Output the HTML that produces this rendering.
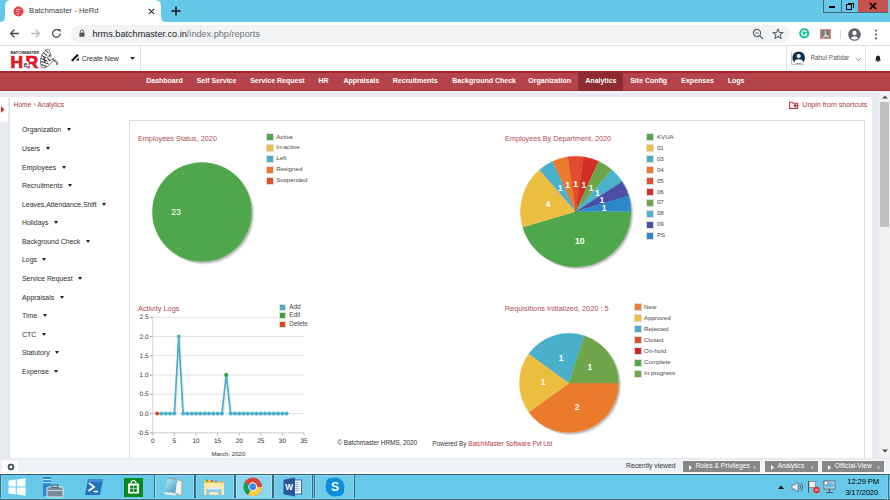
<!DOCTYPE html>
<html><head><meta charset="utf-8">
<style>
*{box-sizing:border-box;margin:0;padding:0}
html,body{width:890px;height:500px;overflow:hidden;background:#fff;font-family:"Liberation Sans",sans-serif;position:relative}
.a{position:absolute}
.t{position:absolute;white-space:nowrap;line-height:1}
</style></head><body>

<!-- ===== Chrome tab strip ===== -->
<div class="a" id="tabstrip" style="left:0;top:0;width:890px;height:22px;background:#66c8e9"></div>
<svg class="a" style="left:0;top:0" width="200" height="22">
  <path d="M0 22 Q5 22 5 17 L5 6 Q5 0 11 0 L155 0 Q161 0 161 6 L161 17 Q161 22 166 22 Z" fill="#fff"/>
</svg>
<svg class="a" style="left:12.8px;top:5.5px" width="11" height="11" viewBox="0 0 11 11">
  <circle cx="5.5" cy="5.5" r="5" fill="#e23a3a"/>
  <path d="M3 3.6Q5 2.6 7 4M2.6 5.6Q4.6 4.4 6.4 6.4M3.6 8Q5 7.4 6 8.6M7.4 3.2L8.2 4.2M8 7.6L9 8" stroke="#fbe3e3" stroke-width="0.9" fill="none"/>
</svg>
<div class="t" style="left:29px;top:7.3px;font-size:7.7px;color:#3c4043">Batchmaster - HeRd</div>
<svg class="a" style="left:148px;top:8px" width="7" height="7" viewBox="0 0 7 7"><path d="M0.8 0.8L6.2 6.2M6.2 0.8L0.8 6.2" stroke="#333" stroke-width="1.15"/></svg>
<svg class="a" style="left:171px;top:6px" width="10" height="10" viewBox="0 0 10 10"><path d="M5 0.5V9.5M0.5 5H9.5" stroke="#1a1a1a" stroke-width="1.6"/></svg>
<!-- window buttons -->
<div class="a" style="left:823px;top:0;width:65px;height:13px;border-left:1px solid #4a6a78;border-bottom:1px solid #4a6a78"></div>
<div class="a" style="left:841px;top:0;width:1px;height:12px;background:#4a6a78"></div>
<div class="a" style="left:858px;top:0;width:30px;height:12px;background:#c75050"></div>
<div class="a" style="left:829px;top:6px;width:6px;height:2px;background:#000"></div>
<div class="a" style="left:848px;top:2.5px;width:5.5px;height:5.5px;border-top:1.2px solid #000;border-right:1.2px solid #000"></div>
<div class="a" style="left:846px;top:4px;width:6px;height:6px;border:1.8px solid #000;background:#66c8e9"></div>
<svg class="a" style="left:869px;top:2px" width="8" height="8" viewBox="0 0 8 8"><path d="M1 1L7 7M7 1L1 7" stroke="#000" stroke-width="1.6"/></svg>

<!-- ===== Toolbar ===== -->
<div class="a" style="left:0;top:22px;width:890px;height:23px;background:#fff"></div>
<div class="a" style="left:0;top:45px;width:890px;height:1px;background:#dcdfe3"></div>
<svg class="a" style="left:9px;top:28px" width="11" height="11" viewBox="0 0 11 11"><path d="M10 5.5H1.5M5.5 1.5L1.5 5.5L5.5 9.5" stroke="#444a50" stroke-width="1.3" fill="none"/></svg>
<svg class="a" style="left:30px;top:28px" width="11" height="11" viewBox="0 0 11 11"><path d="M1 5.5H9.5M5.5 1.5L9.5 5.5L5.5 9.5" stroke="#b8babd" stroke-width="1.3" fill="none"/></svg>
<svg class="a" style="left:51px;top:28px" width="11" height="11" viewBox="0 0 11 11"><path d="M9.2 5.5A3.8 3.8 0 1 1 8 2.6" stroke="#444a50" stroke-width="1.3" fill="none"/><path d="M6.5 1.2H9.6V4.3Z" fill="#444a50"/></svg>
<div class="a" style="left:70.6px;top:24.8px;width:719.5px;height:18px;border-radius:9px;background:#f1f3f4"></div>
<svg class="a" style="left:79.3px;top:29.4px" width="6" height="7.8" viewBox="0 0 7 9"><path d="M1.7 4V2.8A1.8 1.8 0 0 1 5.3 2.8V4" stroke="#555" stroke-width="1.1" fill="none"/><rect x="0.5" y="4" width="6" height="5" rx="0.6" fill="#555"/></svg>
<div class="t" style="left:92.5px;top:29.9px;font-size:9.15px;color:#202124">hrms.batchmaster.co.in<span style="color:#6f7377">/index.php/reports</span></div>
<svg class="a" style="left:752px;top:28px" width="12" height="12" viewBox="0 0 12 12"><circle cx="5" cy="5" r="3.6" stroke="#5f6368" stroke-width="1.2" fill="none"/><path d="M7.6 7.6L11 11" stroke="#5f6368" stroke-width="1.4"/><path d="M3.4 5H6.6" stroke="#5f6368" stroke-width="1"/></svg>
<svg class="a" style="left:772px;top:27.5px" width="12" height="12" viewBox="0 0 12 12"><path d="M6 1L7.4 4.4L11 4.6L8.2 6.9L9.1 10.5L6 8.5L2.9 10.5L3.8 6.9L1 4.6L4.6 4.4Z" stroke="#5f6368" stroke-width="1.1" fill="none" stroke-linejoin="round"/></svg>
<svg class="a" style="left:799px;top:28px" width="10.6" height="10.6" viewBox="0 0 11 11"><circle cx="5.5" cy="5.5" r="5.3" fill="#15c39a"/><path d="M7.8 4.3A2.6 2.6 0 1 0 7.9 6.4H5.8" stroke="#fff" stroke-width="1.3" fill="none"/></svg>
<div class="a" style="left:820px;top:28.6px;width:10.5px;height:10.3px;background:#857d7b;border:1px solid #e58a7c"></div>
<svg class="a" style="left:820.8px;top:29.5px" width="9" height="9" viewBox="0 0 9 9"><path d="M4.3 0.8Q3.6 1.6 4.6 4.2Q5.8 6.6 7.8 7M4.6 4.2Q3.2 7 1.5 7.8M3 6.3Q5 5.6 7.6 6.6" stroke="#eee" stroke-width="0.9" fill="none"/></svg>
<div class="a" style="left:840px;top:30px;width:1px;height:9px;background:#d8d8d8"></div>
<svg class="a" style="left:848px;top:27.5px" width="13" height="13" viewBox="0 0 13 13"><circle cx="6.5" cy="6.5" r="6.3" fill="#5f6368"/><circle cx="6.5" cy="5" r="2.2" fill="#fff"/><path d="M2.6 10.3Q6.5 6.2 10.4 10.3Q6.5 13 2.6 10.3Z" fill="#fff"/></svg>
<svg class="a" style="left:874px;top:28.5px" width="4" height="11" viewBox="0 0 4 11"><circle cx="2" cy="1.6" r="1.1" fill="#5f6368"/><circle cx="2" cy="5.5" r="1.1" fill="#5f6368"/><circle cx="2" cy="9.4" r="1.1" fill="#5f6368"/></svg>

<!-- ===== App header ===== -->
<!-- logo -->
<svg class="a" style="left:0;top:45px" width="62" height="26" viewBox="0 45 62 26">
 <text x="10.6" y="54.2" font-size="4.1" font-weight="bold" fill="#1a1a1a" font-family="Liberation Sans" textLength="28.4" lengthAdjust="spacingAndGlyphs">BATCHMASTER</text>
 <text x="10.6" y="67.6" font-size="16.4" font-weight="bold" fill="#e1141c" stroke="#e1141c" stroke-width="0.7" font-family="Liberation Sans" textLength="12.6" lengthAdjust="spacingAndGlyphs">H</text>
 <text x="25.6" y="67.6" font-size="16.4" font-weight="bold" fill="#e1141c" stroke="#e1141c" stroke-width="0.7" font-family="Liberation Sans" textLength="12.8" lengthAdjust="spacingAndGlyphs">R</text>
 <circle cx="25.6" cy="64.3" r="3.3" fill="#fff" stroke="#a8d8dc" stroke-width="0.6"/>
 <text x="25.6" y="66.8" font-size="7.4" font-weight="bold" fill="#3a3a3a" text-anchor="middle" font-family="Liberation Sans">e</text>
 <path d="M41.5 67.5L40.5 63L40.8 58L42.5 53.5L45.5 50L48 49.2L49.5 50.5L50.3 53.5L51.3 56.3L50.2 57.3L48.3 56.2L47.6 57.6L49.3 60.8L53.5 58.3L57.6 62.2L57.4 64.6L56.5 64.6L56.5 62.6L53.6 60.4L50.8 63.6L47.5 66.5L44 67.8Z" fill="#f4f4f4" stroke="#2a2a2a" stroke-width="0.6"/>
 <path d="M45.5 50.3L48.5 53M43.3 52.8L47.2 55.5M42 55.5L46.2 58M41.3 58.5L47.3 61.2M41 61.5L48.5 63.8M41.4 64.5L46.5 66.4M48 58.5L50.5 61M52.5 59L55 61.5M44 57L45 62" stroke="#151515" stroke-width="0.9" fill="none"/>
 <circle cx="49.6" cy="55.2" r="0.7" fill="#111"/>
</svg>
<!-- create new -->
<svg class="a" style="left:68px;top:50px" width="16" height="14" viewBox="68 50 16 14"><path d="M72.4 60.2L77.4 55.2" stroke="#111" stroke-width="2.1" stroke-linecap="round"/><path d="M75.6 60.6H79V57.2Z" fill="#222"/></svg>
<div class="t" style="left:81.7px;top:55px;font-size:7.3px;color:#333;letter-spacing:-0.15px">Create New</div>
<svg class="a" style="left:130px;top:56.5px" width="5" height="3" viewBox="0 0 5 3"><path d="M0 0H5L2.5 3Z" fill="#333"/></svg>
<div class="a" style="left:140px;top:46px;width:1px;height:25px;background:#e4e4e4"></div>
<div class="a" style="left:786px;top:46px;width:1px;height:25px;background:#e4e4e4"></div>
<div class="a" style="left:865px;top:46px;width:1px;height:25px;background:#e4e4e4"></div>
<!-- user -->
<svg class="a" style="left:791px;top:51px" width="15" height="14" viewBox="0 0 15 14">
 <path d="M0.6 1.5V13.4H13" stroke="#9aa6b0" stroke-width="0.7" fill="none"/>
 <circle cx="7.7" cy="6.8" r="6.3" fill="#0f2d4f"/>
 <circle cx="7.7" cy="5" r="2.1" fill="#fff"/>
 <path d="M3.6 12.6V10.4Q3.9 8.3 7.7 8.2Q11.5 8.3 11.8 10.4V12.6Z" fill="#fff"/>
</svg>
<div class="t" style="left:810.4px;top:54.5px;font-size:6.4px;color:#555">Rahul Patidar</div>
<svg class="a" style="left:856px;top:58px" width="5" height="3" viewBox="0 0 5 3"><path d="M0.3 0.3L2.5 2.5L4.7 0.3" stroke="#666" stroke-width="0.8" fill="none"/></svg>
<svg class="a" style="left:874.8px;top:55px" width="6" height="7" viewBox="0 0 7 8"><path d="M3.5 0.5Q6 0.8 6 3.5V5.5L7 6.5H0L1 5.5V3.5Q1 0.8 3.5 0.5Z" fill="#222"/><circle cx="3.5" cy="7.2" r="0.9" fill="#222"/></svg>


<!-- ===== Nav ===== -->
<div class="a" style="left:0;top:71px;width:890px;height:20px;background:#b5444a"></div>
<div class="a" style="left:0;top:71.3px;width:890px;height:1.5px;background:#a5262d"></div>
<div class="a" style="left:0;top:90px;width:890px;height:1px;background:#a8323a"></div>
<div class="a" style="left:578px;top:72px;width:45px;height:19px;background:#8e2b31"></div>
<div class="t" style="left:146.2px;top:76.5px;font-size:7px;font-weight:bold;color:#fff">Dashboard</div>
<div class="t" style="left:196.7px;top:76.5px;font-size:7px;font-weight:bold;color:#fff">Self Service</div>
<div class="t" style="left:250.2px;top:76.5px;font-size:7px;font-weight:bold;color:#fff">Service Request</div>
<div class="t" style="left:318.5px;top:76.5px;font-size:7px;font-weight:bold;color:#fff">HR</div>
<div class="t" style="left:343.4px;top:76.5px;font-size:7px;font-weight:bold;color:#fff">Appraisals</div>
<div class="t" style="left:392.8px;top:76.5px;font-size:7px;font-weight:bold;color:#fff">Recruitments</div>
<div class="t" style="left:452.2px;top:76.5px;font-size:7px;font-weight:bold;color:#fff">Background Check</div>
<div class="t" style="left:528.3px;top:76.5px;font-size:7px;font-weight:bold;color:#fff">Organization</div>
<div class="t" style="left:585.3px;top:76.5px;font-size:7px;font-weight:bold;color:#fff">Analytics</div>
<div class="t" style="left:630.2px;top:76.5px;font-size:7px;font-weight:bold;color:#fff">Site Config</div>
<div class="t" style="left:681.3px;top:76.5px;font-size:7px;font-weight:bold;color:#fff">Expenses</div>
<div class="t" style="left:727.7px;top:76.5px;font-size:7px;font-weight:bold;color:#fff">Logs</div>

<!-- ===== Content ===== -->
<div class="a" style="left:0;top:91px;width:880px;height:367px;background:#e8ecf0"></div>
<div class="a" style="left:7.7px;top:97px;width:2px;height:361px;background:#e3e8f1"></div>
<div class="a" style="left:9.6px;top:97px;width:862.4px;height:361px;background:#fff"></div>
<div class="a" style="left:0;top:97px;width:8px;height:25px;background:#fff"></div>
<div class="a" style="left:0;top:91px;width:890px;height:2px;background:#eef3f5"></div>
<div class="a" style="left:879px;top:91px;width:11px;height:367px;background:#f1f1f1"></div>
<div class="a" style="left:880px;top:102px;width:8.5px;height:125px;background:#c1c1c1"></div>
<svg class="a" style="left:882px;top:95px" width="6" height="4" viewBox="0 0 6 4"><path d="M0 3.6L3 0.4L6 3.6Z" fill="#505050"/></svg>
<svg class="a" style="left:882px;top:448.5px" width="6" height="4" viewBox="0 0 6 4"><path d="M0 0.4L3 3.6L6 0.4Z" fill="#505050"/></svg>

<!-- breadcrumb -->
<svg class="a" style="left:1px;top:106px" width="4" height="7" viewBox="0 0 4 7"><path d="M0 0L3.5 3.5L0 7Z" fill="#d9302c"/></svg>
<div class="t" style="left:13.7px;top:102.2px;font-size:6.5px;color:#a9343c">Home</div>
<div class="t" style="left:33.6px;top:101.6px;font-size:6.5px;color:#777">›</div>
<div class="t" style="left:37.6px;top:102.2px;font-size:6.6px;color:#a9343c">Analytics</div>
<svg class="a" style="left:789px;top:101px" width="10" height="8" viewBox="0 0 10 8"><path d="M0.6 1.2H3L4 2.2H8.5V7.4H0.6Z" stroke="#b0393f" stroke-width="1.1" fill="none"/><path d="M9.6 4.6H5.2M6.7 3L5 4.6L6.7 6.2" stroke="#b0393f" stroke-width="1.1" fill="none"/></svg>
<div class="t" style="left:802.3px;top:101.4px;font-size:7.05px;color:#b0393f">Unpin from shortcuts</div>
<div class="t" style="left:22px;top:127.4px;font-size:6.9px;color:#2a2a2a">Organization<span style="display:inline-block;margin-left:5.5px;width:0;height:0;border-left:2.5px solid transparent;border-right:2.5px solid transparent;border-top:3px solid #222;vertical-align:1px"></span></div>
<div class="t" style="left:22px;top:146.0px;font-size:6.9px;color:#2a2a2a">Users<span style="display:inline-block;margin-left:5.5px;width:0;height:0;border-left:2.5px solid transparent;border-right:2.5px solid transparent;border-top:3px solid #222;vertical-align:1px"></span></div>
<div class="t" style="left:22px;top:164.5px;font-size:6.9px;color:#2a2a2a">Employees<span style="display:inline-block;margin-left:5.5px;width:0;height:0;border-left:2.5px solid transparent;border-right:2.5px solid transparent;border-top:3px solid #222;vertical-align:1px"></span></div>
<div class="t" style="left:22px;top:183.1px;font-size:6.9px;color:#2a2a2a">Recruitments<span style="display:inline-block;margin-left:5.5px;width:0;height:0;border-left:2.5px solid transparent;border-right:2.5px solid transparent;border-top:3px solid #222;vertical-align:1px"></span></div>
<div class="t" style="left:22px;top:201.7px;font-size:6.9px;color:#2a2a2a">Leaves,Attendance,Shift<span style="display:inline-block;margin-left:5.5px;width:0;height:0;border-left:2.5px solid transparent;border-right:2.5px solid transparent;border-top:3px solid #222;vertical-align:1px"></span></div>
<div class="t" style="left:22px;top:220.2px;font-size:6.9px;color:#2a2a2a">Holidays<span style="display:inline-block;margin-left:5.5px;width:0;height:0;border-left:2.5px solid transparent;border-right:2.5px solid transparent;border-top:3px solid #222;vertical-align:1px"></span></div>
<div class="t" style="left:22px;top:238.8px;font-size:6.9px;color:#2a2a2a">Background Check<span style="display:inline-block;margin-left:5.5px;width:0;height:0;border-left:2.5px solid transparent;border-right:2.5px solid transparent;border-top:3px solid #222;vertical-align:1px"></span></div>
<div class="t" style="left:22px;top:257.4px;font-size:6.9px;color:#2a2a2a">Logs<span style="display:inline-block;margin-left:5.5px;width:0;height:0;border-left:2.5px solid transparent;border-right:2.5px solid transparent;border-top:3px solid #222;vertical-align:1px"></span></div>
<div class="t" style="left:22px;top:276.0px;font-size:6.9px;color:#2a2a2a">Service Request<span style="display:inline-block;margin-left:5.5px;width:0;height:0;border-left:2.5px solid transparent;border-right:2.5px solid transparent;border-top:3px solid #222;vertical-align:1px"></span></div>
<div class="t" style="left:22px;top:294.5px;font-size:6.9px;color:#2a2a2a">Appraisals<span style="display:inline-block;margin-left:5.5px;width:0;height:0;border-left:2.5px solid transparent;border-right:2.5px solid transparent;border-top:3px solid #222;vertical-align:1px"></span></div>
<div class="t" style="left:22px;top:313.1px;font-size:6.9px;color:#2a2a2a">Time<span style="display:inline-block;margin-left:5.5px;width:0;height:0;border-left:2.5px solid transparent;border-right:2.5px solid transparent;border-top:3px solid #222;vertical-align:1px"></span></div>
<div class="t" style="left:22px;top:331.7px;font-size:6.9px;color:#2a2a2a">CTC<span style="display:inline-block;margin-left:5.5px;width:0;height:0;border-left:2.5px solid transparent;border-right:2.5px solid transparent;border-top:3px solid #222;vertical-align:1px"></span></div>
<div class="t" style="left:22px;top:350.2px;font-size:6.9px;color:#2a2a2a">Statutory<span style="display:inline-block;margin-left:5.5px;width:0;height:0;border-left:2.5px solid transparent;border-right:2.5px solid transparent;border-top:3px solid #222;vertical-align:1px"></span></div>
<div class="t" style="left:22px;top:368.8px;font-size:6.9px;color:#2a2a2a">Expense<span style="display:inline-block;margin-left:5.5px;width:0;height:0;border-left:2.5px solid transparent;border-right:2.5px solid transparent;border-top:3px solid #222;vertical-align:1px"></span></div>
<!-- chart panel -->
<div class="a" style="left:129px;top:120px;width:736px;height:345px;border:1px solid #dcdcdc"></div>

<!-- CHARTS -->
<div class="t" style="left:137.9px;top:134.8px;font-size:7.3px;color:#b24a52">Employees Status, 2020</div>
<div class="t" style="left:505.1px;top:135.0px;font-size:7.23px;color:#b24a52">Employees By Department, 2020</div>
<div class="t" style="left:138px;top:304.9px;font-size:7.4px;color:#b24a52">Activity Logs</div>
<div class="t" style="left:504.7px;top:305.4px;font-size:7.4px;color:#b24a52">Requisitions Initialized, 2020 : 5</div>
<svg class="a" style="left:0;top:0" width="890" height="500">
<circle cx="202.71" cy="212.71" r="49.8" fill="rgba(0,0,0,0.12)"/>
<circle cx="203.41" cy="213.41" r="49.8" fill="rgba(0,0,0,0.1)"/>
<circle cx="204.12" cy="214.12" r="49.8" fill="rgba(0,0,0,0.08)"/>
<circle cx="204.83" cy="214.83" r="49.8" fill="rgba(0,0,0,0.05)"/>
<circle cx="202" cy="212" r="49.8" fill="#fff"/>
<circle cx="202" cy="212" r="49.8" fill="#4ea84b"/>
<text x="176.10" y="214.77" text-anchor="middle" font-size="8.8" font-weight="normal" fill="#fff" font-family="Liberation Sans">23</text>
<circle cx="576.41" cy="212.31" r="55.3" fill="rgba(0,0,0,0.12)"/>
<circle cx="577.11" cy="213.01" r="55.3" fill="rgba(0,0,0,0.1)"/>
<circle cx="577.82" cy="213.72" r="55.3" fill="rgba(0,0,0,0.08)"/>
<circle cx="578.53" cy="214.43" r="55.3" fill="rgba(0,0,0,0.05)"/>
<circle cx="575.7" cy="211.6" r="55.3" fill="#fff"/>
<path d="M575.7 211.6L631.00 211.60A55.3 55.3 0 0 1 522.64 227.18Z" fill="#4ea84b" stroke="#4ea84b" stroke-width="0.3"/>
<path d="M575.7 211.6L522.64 227.18A55.3 55.3 0 0 1 539.49 169.81Z" fill="#ecbe3f" stroke="#ecbe3f" stroke-width="0.3"/>
<path d="M575.7 211.6L539.49 169.81A55.3 55.3 0 0 1 552.73 161.30Z" fill="#4aafca" stroke="#4aafca" stroke-width="0.3"/>
<path d="M575.7 211.6L552.73 161.30A55.3 55.3 0 0 1 567.83 156.86Z" fill="#ec7a2d" stroke="#ec7a2d" stroke-width="0.3"/>
<path d="M575.7 211.6L567.83 156.86A55.3 55.3 0 0 1 583.57 156.86Z" fill="#dc4e2c" stroke="#dc4e2c" stroke-width="0.3"/>
<path d="M575.7 211.6L583.57 156.86A55.3 55.3 0 0 1 598.67 161.30Z" fill="#d42f24" stroke="#d42f24" stroke-width="0.3"/>
<path d="M575.7 211.6L598.67 161.30A55.3 55.3 0 0 1 611.91 169.81Z" fill="#6fa54a" stroke="#6fa54a" stroke-width="0.3"/>
<path d="M575.7 211.6L611.91 169.81A55.3 55.3 0 0 1 622.22 181.70Z" fill="#4bb4cc" stroke="#4bb4cc" stroke-width="0.3"/>
<path d="M575.7 211.6L622.22 181.70A55.3 55.3 0 0 1 628.76 196.02Z" fill="#4a4ea6" stroke="#4a4ea6" stroke-width="0.3"/>
<path d="M575.7 211.6L628.76 196.02A55.3 55.3 0 0 1 631.00 211.60Z" fill="#2b87c6" stroke="#2b87c6" stroke-width="0.3"/>
<text x="579.79" y="243.76" text-anchor="middle" font-size="8.6" font-weight="bold" fill="#fff" font-family="Liberation Sans">10</text>
<text x="548.11" y="207.19" text-anchor="middle" font-size="8.6" font-weight="bold" fill="#fff" font-family="Liberation Sans">4</text>
<text x="560.15" y="191.10" text-anchor="middle" font-size="8.6" font-weight="bold" fill="#fff" font-family="Liberation Sans">1</text>
<text x="567.60" y="187.70" text-anchor="middle" font-size="8.6" font-weight="bold" fill="#fff" font-family="Liberation Sans">1</text>
<text x="575.70" y="186.54" text-anchor="middle" font-size="8.6" font-weight="bold" fill="#fff" font-family="Liberation Sans">1</text>
<text x="583.80" y="187.70" text-anchor="middle" font-size="8.6" font-weight="bold" fill="#fff" font-family="Liberation Sans">1</text>
<text x="591.25" y="191.10" text-anchor="middle" font-size="8.6" font-weight="bold" fill="#fff" font-family="Liberation Sans">1</text>
<text x="597.43" y="196.46" text-anchor="middle" font-size="8.6" font-weight="bold" fill="#fff" font-family="Liberation Sans">1</text>
<text x="601.86" y="203.35" text-anchor="middle" font-size="8.6" font-weight="bold" fill="#fff" font-family="Liberation Sans">1</text>
<text x="604.16" y="211.20" text-anchor="middle" font-size="8.6" font-weight="bold" fill="#fff" font-family="Liberation Sans">1</text>
<circle cx="569.71" cy="383.71" r="49.7" fill="rgba(0,0,0,0.12)"/>
<circle cx="570.41" cy="384.41" r="49.7" fill="rgba(0,0,0,0.1)"/>
<circle cx="571.12" cy="385.12" r="49.7" fill="rgba(0,0,0,0.08)"/>
<circle cx="571.83" cy="385.83" r="49.7" fill="rgba(0,0,0,0.05)"/>
<circle cx="569" cy="383" r="49.7" fill="#fff"/>
<path d="M569 383L618.70 383.00A49.7 49.7 0 0 1 528.79 412.21Z" fill="#ec7a2d" stroke="#ec7a2d" stroke-width="0.3"/>
<path d="M569 383L528.79 412.21A49.7 49.7 0 0 1 528.79 353.79Z" fill="#ecbe3f" stroke="#ecbe3f" stroke-width="0.3"/>
<path d="M569 383L528.79 353.79A49.7 49.7 0 0 1 584.36 335.73Z" fill="#4aafca" stroke="#4aafca" stroke-width="0.3"/>
<path d="M569 383L584.36 335.73A49.7 49.7 0 0 1 618.70 383.00Z" fill="#6fa54a" stroke="#6fa54a" stroke-width="0.3"/>
<text x="576.99" y="410.00" text-anchor="middle" font-size="8.4" font-weight="bold" fill="#fff" font-family="Liberation Sans">2</text>
<text x="543.16" y="385.42" text-anchor="middle" font-size="8.4" font-weight="bold" fill="#fff" font-family="Liberation Sans">1</text>
<text x="561.01" y="360.84" text-anchor="middle" font-size="8.4" font-weight="bold" fill="#fff" font-family="Liberation Sans">1</text>
<text x="589.91" y="370.23" text-anchor="middle" font-size="8.4" font-weight="bold" fill="#fff" font-family="Liberation Sans">1</text>
</svg>
<div class="a" style="left:266px;top:133px;width:8px;height:8px;border:1px solid #dedede;background:#4ea84b"></div>
<div class="t" style="left:276.2px;top:133.50px;font-size:6.2px;color:#464646">Active</div>
<div class="a" style="left:266px;top:144px;width:8px;height:8px;border:1px solid #dedede;background:#ecbe3f"></div>
<div class="t" style="left:276.2px;top:144.48px;font-size:6.2px;color:#464646">In-active</div>
<div class="a" style="left:266px;top:155px;width:8px;height:8px;border:1px solid #dedede;background:#4aafca"></div>
<div class="t" style="left:276.2px;top:155.46px;font-size:6.2px;color:#464646">Left</div>
<div class="a" style="left:266px;top:166px;width:8px;height:8px;border:1px solid #dedede;background:#ec7a2d"></div>
<div class="t" style="left:276.2px;top:166.44px;font-size:6.2px;color:#464646">Resigned</div>
<div class="a" style="left:266px;top:177px;width:8px;height:8px;border:1px solid #dedede;background:#dc4e2c"></div>
<div class="t" style="left:276.2px;top:177.42px;font-size:6.2px;color:#464646">Suspended</div>
<div class="a" style="left:646px;top:133px;width:8px;height:8px;border:1px solid #dedede;background:#4ea84b"></div>
<div class="t" style="left:656.9px;top:133.60px;font-size:6.2px;color:#464646">KVUA</div>
<div class="a" style="left:646px;top:144px;width:8px;height:8px;border:1px solid #dedede;background:#ecbe3f"></div>
<div class="t" style="left:656.9px;top:144.58px;font-size:6.2px;color:#464646">01</div>
<div class="a" style="left:646px;top:155px;width:8px;height:8px;border:1px solid #dedede;background:#4aafca"></div>
<div class="t" style="left:656.9px;top:155.56px;font-size:6.2px;color:#464646">03</div>
<div class="a" style="left:646px;top:166px;width:8px;height:8px;border:1px solid #dedede;background:#ec7a2d"></div>
<div class="t" style="left:656.9px;top:166.54px;font-size:6.2px;color:#464646">04</div>
<div class="a" style="left:646px;top:177px;width:8px;height:8px;border:1px solid #dedede;background:#dc4e2c"></div>
<div class="t" style="left:656.9px;top:177.52px;font-size:6.2px;color:#464646">05</div>
<div class="a" style="left:646px;top:188px;width:8px;height:8px;border:1px solid #dedede;background:#d42f24"></div>
<div class="t" style="left:656.9px;top:188.50px;font-size:6.2px;color:#464646">06</div>
<div class="a" style="left:646px;top:199px;width:8px;height:8px;border:1px solid #dedede;background:#6fa54a"></div>
<div class="t" style="left:656.9px;top:199.48px;font-size:6.2px;color:#464646">07</div>
<div class="a" style="left:646px;top:210px;width:8px;height:8px;border:1px solid #dedede;background:#4bb4cc"></div>
<div class="t" style="left:656.9px;top:210.46px;font-size:6.2px;color:#464646">08</div>
<div class="a" style="left:646px;top:221px;width:8px;height:8px;border:1px solid #dedede;background:#4a4ea6"></div>
<div class="t" style="left:656.9px;top:221.44px;font-size:6.2px;color:#464646">09</div>
<div class="a" style="left:646px;top:232px;width:8px;height:8px;border:1px solid #dedede;background:#2b87c6"></div>
<div class="t" style="left:656.9px;top:232.42px;font-size:6.2px;color:#464646">PS</div>
<div class="a" style="left:634px;top:303px;width:8px;height:8px;border:1px solid #dedede;background:#ec7a2d"></div>
<div class="t" style="left:644.1px;top:303.90px;font-size:6.2px;color:#464646">New</div>
<div class="a" style="left:634px;top:314px;width:8px;height:8px;border:1px solid #dedede;background:#ecbe3f"></div>
<div class="t" style="left:644.1px;top:314.97px;font-size:6.2px;color:#464646">Approved</div>
<div class="a" style="left:634px;top:325px;width:8px;height:8px;border:1px solid #dedede;background:#4aafca"></div>
<div class="t" style="left:644.1px;top:326.04px;font-size:6.2px;color:#464646">Rejected</div>
<div class="a" style="left:634px;top:336px;width:8px;height:8px;border:1px solid #dedede;background:#dc4e2c"></div>
<div class="t" style="left:644.1px;top:337.11px;font-size:6.2px;color:#464646">Closed</div>
<div class="a" style="left:634px;top:347px;width:8px;height:8px;border:1px solid #dedede;background:#cf261c"></div>
<div class="t" style="left:644.1px;top:348.18px;font-size:6.2px;color:#464646">On-hold</div>
<div class="a" style="left:634px;top:359px;width:8px;height:8px;border:1px solid #dedede;background:#4ea84b"></div>
<div class="t" style="left:644.1px;top:359.25px;font-size:6.2px;color:#464646">Complete</div>
<div class="a" style="left:634px;top:370px;width:8px;height:8px;border:1px solid #dedede;background:#6fa54a"></div>
<div class="t" style="left:644.1px;top:370.32px;font-size:6.2px;color:#464646">In progress</div>
<svg class="a" style="left:0;top:0" width="890" height="500">
<line x1="150" y1="317.25" x2="304.2" y2="317.25" stroke="#e3e3e3" stroke-width="1"/>
<line x1="150" y1="317.25" x2="153" y2="317.25" stroke="#999" stroke-width="0.8"/>
<text x="148.5" y="319.45" text-anchor="end" font-size="6.4" fill="#333" font-family="Liberation Sans" text-rendering="geometricPrecision">2.5</text>
<line x1="150" y1="336.50" x2="304.2" y2="336.50" stroke="#e3e3e3" stroke-width="1"/>
<line x1="150" y1="336.50" x2="153" y2="336.50" stroke="#999" stroke-width="0.8"/>
<text x="148.5" y="338.70" text-anchor="end" font-size="6.4" fill="#333" font-family="Liberation Sans" text-rendering="geometricPrecision">2.0</text>
<line x1="150" y1="355.75" x2="304.2" y2="355.75" stroke="#e3e3e3" stroke-width="1"/>
<line x1="150" y1="355.75" x2="153" y2="355.75" stroke="#999" stroke-width="0.8"/>
<text x="148.5" y="357.95" text-anchor="end" font-size="6.4" fill="#333" font-family="Liberation Sans" text-rendering="geometricPrecision">1.5</text>
<line x1="150" y1="375.00" x2="304.2" y2="375.00" stroke="#e3e3e3" stroke-width="1"/>
<line x1="150" y1="375.00" x2="153" y2="375.00" stroke="#999" stroke-width="0.8"/>
<text x="148.5" y="377.20" text-anchor="end" font-size="6.4" fill="#333" font-family="Liberation Sans" text-rendering="geometricPrecision">1.0</text>
<line x1="150" y1="394.25" x2="304.2" y2="394.25" stroke="#e3e3e3" stroke-width="1"/>
<line x1="150" y1="394.25" x2="153" y2="394.25" stroke="#999" stroke-width="0.8"/>
<text x="148.5" y="396.45" text-anchor="end" font-size="6.4" fill="#333" font-family="Liberation Sans" text-rendering="geometricPrecision">0.5</text>
<line x1="150" y1="413.50" x2="304.2" y2="413.50" stroke="#e3e3e3" stroke-width="1"/>
<line x1="150" y1="413.50" x2="153" y2="413.50" stroke="#999" stroke-width="0.8"/>
<text x="148.5" y="415.70" text-anchor="end" font-size="6.4" fill="#333" font-family="Liberation Sans" text-rendering="geometricPrecision">0.0</text>
<line x1="150" y1="432.75" x2="304.2" y2="432.75" stroke="#e3e3e3" stroke-width="1"/>
<line x1="150" y1="432.75" x2="153" y2="432.75" stroke="#999" stroke-width="0.8"/>
<text x="148.5" y="434.95" text-anchor="end" font-size="6.4" fill="#333" font-family="Liberation Sans" text-rendering="geometricPrecision">-0.5</text>
<line x1="152.80" y1="317.25" x2="152.80" y2="432.75" stroke="#d8d8d8" stroke-width="1"/>
<line x1="152.80" y1="432.75" x2="304.00" y2="432.75" stroke="#d8d8d8" stroke-width="1"/>
<line x1="152.80" y1="432.75" x2="152.80" y2="435.75" stroke="#aaa" stroke-width="0.8"/>
<text x="152.80" y="443.30" text-anchor="middle" font-size="6.4" fill="#333" font-family="Liberation Sans" text-rendering="geometricPrecision">0</text>
<line x1="174.40" y1="432.75" x2="174.40" y2="435.75" stroke="#aaa" stroke-width="0.8"/>
<text x="174.40" y="443.30" text-anchor="middle" font-size="6.4" fill="#333" font-family="Liberation Sans" text-rendering="geometricPrecision">5</text>
<line x1="196.00" y1="432.75" x2="196.00" y2="435.75" stroke="#aaa" stroke-width="0.8"/>
<text x="196.00" y="443.30" text-anchor="middle" font-size="6.4" fill="#333" font-family="Liberation Sans" text-rendering="geometricPrecision">10</text>
<line x1="217.60" y1="432.75" x2="217.60" y2="435.75" stroke="#aaa" stroke-width="0.8"/>
<text x="217.60" y="443.30" text-anchor="middle" font-size="6.4" fill="#333" font-family="Liberation Sans" text-rendering="geometricPrecision">15</text>
<line x1="239.20" y1="432.75" x2="239.20" y2="435.75" stroke="#aaa" stroke-width="0.8"/>
<text x="239.20" y="443.30" text-anchor="middle" font-size="6.4" fill="#333" font-family="Liberation Sans" text-rendering="geometricPrecision">20</text>
<line x1="260.80" y1="432.75" x2="260.80" y2="435.75" stroke="#aaa" stroke-width="0.8"/>
<text x="260.80" y="443.30" text-anchor="middle" font-size="6.4" fill="#333" font-family="Liberation Sans" text-rendering="geometricPrecision">25</text>
<line x1="282.40" y1="432.75" x2="282.40" y2="435.75" stroke="#aaa" stroke-width="0.8"/>
<text x="282.40" y="443.30" text-anchor="middle" font-size="6.4" fill="#333" font-family="Liberation Sans" text-rendering="geometricPrecision">30</text>
<line x1="304.00" y1="432.75" x2="304.00" y2="435.75" stroke="#aaa" stroke-width="0.8"/>
<text x="304.00" y="443.30" text-anchor="middle" font-size="6.4" fill="#333" font-family="Liberation Sans" text-rendering="geometricPrecision">35</text>
<text x="228.40" y="456" text-anchor="middle" font-size="6.1" fill="#333" font-family="Liberation Sans">March, 2020</text>
<polyline points="157.12,413.50 161.44,413.50 165.76,413.50 170.08,413.50 174.40,413.50 178.72,336.50 183.04,413.50 187.36,413.50 191.68,413.50 196.00,413.50 200.32,413.50 204.64,413.50 208.96,413.50 213.28,413.50 217.60,413.50 221.92,413.50 226.24,375.00 230.56,413.50 234.88,413.50 239.20,413.50 243.52,413.50 247.84,413.50 252.16,413.50 256.48,413.50 260.80,413.50 265.12,413.50 269.44,413.50 273.76,413.50 278.08,413.50 282.40,413.50 286.72,413.50" fill="none" stroke="rgba(0,0,0,0.08)" stroke-width="2.5" transform="translate(1,1)"/>
<polyline points="157.12,413.50 161.44,413.50 165.76,413.50 170.08,413.50 174.40,413.50 178.72,336.50 183.04,413.50 187.36,413.50 191.68,413.50 196.00,413.50 200.32,413.50 204.64,413.50 208.96,413.50 213.28,413.50 217.60,413.50 221.92,413.50 226.24,375.00 230.56,413.50 234.88,413.50 239.20,413.50 243.52,413.50 247.84,413.50 252.16,413.50 256.48,413.50 260.80,413.50 265.12,413.50 269.44,413.50 273.76,413.50 278.08,413.50 282.40,413.50 286.72,413.50" fill="none" stroke="#4aafca" stroke-width="1.7"/>
<circle cx="161.44" cy="413.50" r="1.9" fill="#4aafca"/>
<circle cx="165.76" cy="413.50" r="1.9" fill="#4aafca"/>
<circle cx="170.08" cy="413.50" r="1.9" fill="#4aafca"/>
<circle cx="174.40" cy="413.50" r="1.9" fill="#4aafca"/>
<circle cx="178.72" cy="336.50" r="1.9" fill="#4aafca"/>
<circle cx="183.04" cy="413.50" r="1.9" fill="#4aafca"/>
<circle cx="187.36" cy="413.50" r="1.9" fill="#4aafca"/>
<circle cx="191.68" cy="413.50" r="1.9" fill="#4aafca"/>
<circle cx="196.00" cy="413.50" r="1.9" fill="#4aafca"/>
<circle cx="200.32" cy="413.50" r="1.9" fill="#4aafca"/>
<circle cx="204.64" cy="413.50" r="1.9" fill="#4aafca"/>
<circle cx="208.96" cy="413.50" r="1.9" fill="#4aafca"/>
<circle cx="213.28" cy="413.50" r="1.9" fill="#4aafca"/>
<circle cx="217.60" cy="413.50" r="1.9" fill="#4aafca"/>
<circle cx="221.92" cy="413.50" r="1.9" fill="#4aafca"/>
<circle cx="226.24" cy="375.00" r="1.9" fill="#4aafca"/>
<circle cx="230.56" cy="413.50" r="1.9" fill="#4aafca"/>
<circle cx="234.88" cy="413.50" r="1.9" fill="#4aafca"/>
<circle cx="239.20" cy="413.50" r="1.9" fill="#4aafca"/>
<circle cx="243.52" cy="413.50" r="1.9" fill="#4aafca"/>
<circle cx="247.84" cy="413.50" r="1.9" fill="#4aafca"/>
<circle cx="252.16" cy="413.50" r="1.9" fill="#4aafca"/>
<circle cx="256.48" cy="413.50" r="1.9" fill="#4aafca"/>
<circle cx="260.80" cy="413.50" r="1.9" fill="#4aafca"/>
<circle cx="265.12" cy="413.50" r="1.9" fill="#4aafca"/>
<circle cx="269.44" cy="413.50" r="1.9" fill="#4aafca"/>
<circle cx="273.76" cy="413.50" r="1.9" fill="#4aafca"/>
<circle cx="278.08" cy="413.50" r="1.9" fill="#4aafca"/>
<circle cx="282.40" cy="413.50" r="1.9" fill="#4aafca"/>
<circle cx="286.72" cy="413.50" r="1.9" fill="#4aafca"/>
<circle cx="226.24" cy="375.00" r="2.0" fill="#3aa23c"/>
<circle cx="157.12" cy="413.50" r="2.0" fill="#e4471f"/>
</svg>
<div class="a" style="left:277.5px;top:302.5px;width:26px;height:25.5px;background:#fff"></div>
<div class="a" style="left:279px;top:304px;width:7px;height:7px;border:1px solid #dedede;background:#4aafca"></div>
<div class="t" style="left:289.3px;top:304.00px;font-size:6.4px;color:#464646">Add</div>
<div class="a" style="left:279px;top:312px;width:7px;height:7px;border:1px solid #dedede;background:#3aa23c"></div>
<div class="t" style="left:289.3px;top:312.45px;font-size:6.4px;color:#464646">Edit</div>
<div class="a" style="left:279px;top:321px;width:7px;height:7px;border:1px solid #dedede;background:#e4471f"></div>
<div class="t" style="left:289.3px;top:320.90px;font-size:6.4px;color:#464646">Delete</div>
<div class="t" style="left:337.3px;top:440.3px;font-size:6.5px;color:#333;letter-spacing:-0.1px">© Batchmaster HRMS, 2020</div>
<div class="t" style="left:432.3px;top:440.5px;font-size:6.35px;color:#333">Powered By <span style="color:#b0393f">BatchMaster Software Pvt Ltd</span></div>
<!-- /CHARTS -->
<!-- bottom bar -->
<div class="a" style="left:0;top:457.5px;width:890px;height:16px;background:#eef1f5;border-top:1px solid #e4e8ec"></div>
<div class="a" style="left:0;top:472px;width:890px;height:1.5px;background:#fbfbfb"></div>
<div class="a" style="left:1.5px;top:461px;width:16.5px;height:11px;background:#fff"></div>
<svg class="a" style="left:6.5px;top:463px" width="8" height="8" viewBox="0 0 8 8"><circle cx="4" cy="4" r="2.2" stroke="#3a4c5c" stroke-width="1.5" fill="none"/><path d="M4 0.4V1.9M4 6.1V7.6M0.4 4H1.9M6.1 4H7.6M1.45 1.45L2.5 2.5M5.5 5.5L6.55 6.55M6.55 1.45L5.5 2.5M2.5 5.5L1.45 6.55" stroke="#3a4c5c" stroke-width="1.2"/></svg>
<div class="t" style="left:626px;top:463.2px;font-size:6.8px;color:#333">Recently viewed</div>
<div class="a" style="left:683px;top:461.3px;width:77.2px;height:11px;background:#878787;outline:1px solid #f7f7f7"></div>
<svg class="a" style="left:689.0px;top:464.8px" width="3" height="5" viewBox="0 0 3 5"><path d="M0 0L3 2.5L0 5Z" fill="#fff"/></svg>
<div class="t" style="left:695.5px;top:463.2px;font-size:6.7px;color:#fff">Roles &amp; Privileges</div>
<div class="t" style="left:753.2px;top:464.6px;font-size:5px;color:#eee">x</div>
<div class="a" style="left:765px;top:461.3px;width:52.9px;height:11px;background:#878787;outline:1px solid #f7f7f7"></div>
<svg class="a" style="left:771.0px;top:464.8px" width="3" height="5" viewBox="0 0 3 5"><path d="M0 0L3 2.5L0 5Z" fill="#fff"/></svg>
<div class="t" style="left:777.5px;top:463.2px;font-size:6.7px;color:#fff">Analytics</div>
<div class="t" style="left:810.9px;top:464.6px;font-size:5px;color:#eee">x</div>
<div class="a" style="left:822.3px;top:461.3px;width:61.9px;height:11px;background:#878787;outline:1px solid #f7f7f7"></div>
<svg class="a" style="left:828.3px;top:464.8px" width="3" height="5" viewBox="0 0 3 5"><path d="M0 0L3 2.5L0 5Z" fill="#fff"/></svg>
<div class="t" style="left:834.8px;top:463.2px;font-size:6.7px;color:#fff">Official-View</div>
<div class="t" style="left:877.2px;top:464.6px;font-size:5px;color:#eee">x</div>
<!-- taskbar -->
<div class="a" style="left:0;top:474px;width:890px;height:26px;background:#66c9e9"></div>
<div class="a" style="left:0;top:473.5px;width:890px;height:1px;background:#3d5a68"></div>
<!-- start -->
<svg class="a" style="left:8px;top:478px" width="18" height="18" viewBox="0 0 18 18"><path d="M0.5 2.6L7.8 1.6V8.5H0.5ZM8.8 1.45L17.5 0.3V8.5H8.8ZM0.5 9.5H7.8V16.4L0.5 15.4ZM8.8 9.5H17.5V17.7L8.8 16.55Z" fill="#fff"/></svg>
<!-- server manager -->
<svg class="a" style="left:42px;top:476px" width="22" height="22" viewBox="0 0 22 22"><rect x="1" y="1" width="8" height="19" fill="#2a8ad4"/><rect x="1" y="3" width="8" height="1.2" fill="#bfe3ff"/><rect x="1" y="6" width="8" height="1.2" fill="#bfe3ff"/><rect x="5" y="11" width="16" height="10" rx="1.5" fill="#7a8a96" stroke="#fff" stroke-width="0.8"/><rect x="10" y="9" width="6" height="2.5" fill="none" stroke="#50606a" stroke-width="1"/><rect x="5.5" y="14" width="15" height="1" fill="#c8d2d8"/></svg>
<!-- powershell -->
<svg class="a" style="left:84px;top:478px" width="20" height="18" viewBox="0 0 20 18"><path d="M4 1H19L16 17H1Z" fill="#2671be"/><path d="M5 1H19L18.5 4H4.4Z" fill="#5aa0e0" opacity="0.6"/><path d="M5 5L10 9L4.5 13" stroke="#fff" stroke-width="1.8" fill="none"/><path d="M9.5 13.5H14" stroke="#fff" stroke-width="1.5"/></svg>
<!-- store -->
<div class="a" style="left:124px;top:477.5px;width:19px;height:19px;background:#0b8a1e"></div>
<svg class="a" style="left:124px;top:477.5px" width="19" height="19" viewBox="0 0 19 19"><path d="M7 5.5Q7 2.5 9.5 2.5Q12 2.5 12 5.5" stroke="#fff" stroke-width="1.1" fill="none"/><path d="M4 5.5H15V15.5H4Z" fill="#fff"/><rect x="6.2" y="7.5" width="3" height="3" fill="#0b8a1e"/><rect x="9.8" y="7.5" width="3" height="3" fill="#0b8a1e"/><rect x="6.2" y="11" width="3" height="3" fill="#0b8a1e"/><rect x="9.8" y="11" width="3" height="3" fill="#0b8a1e"/></svg>
<div class="a" style="left:153.5px;top:474px;width:1px;height:26px;background:#3d8fb0"></div>
<!-- buttons -->
<div class="a" style="left:154px;top:474px;width:1px;height:25px;background:#3f6878"></div>
<div class="a" style="left:155px;top:474.5px;width:39px;height:24px;background:#70cbe8;border:1px solid #8ad8f3;border-bottom:none"></div>
<div class="a" style="left:194px;top:474px;width:1px;height:25px;background:#3f6878"></div>
<div class="a" style="left:195px;top:474px;width:1px;height:25px;background:#3f6878"></div>
<div class="a" style="left:196px;top:474.5px;width:38px;height:24px;background:#70cbe8;border:1px solid #8ad8f3;border-bottom:none"></div>
<div class="a" style="left:234px;top:474px;width:1px;height:25px;background:#3f6878"></div>
<div class="a" style="left:235px;top:474px;width:1px;height:25px;background:#3f6878"></div>
<div class="a" style="left:236px;top:474.5px;width:36px;height:24px;background:#8ad6f0;border:1px solid #a8e4f7;border-bottom:none"></div>
<div class="a" style="left:272px;top:474px;width:1px;height:25px;background:#3f6878"></div>
<div class="a" style="left:273px;top:474px;width:1px;height:25px;background:#3f6878"></div>
<div class="a" style="left:274px;top:474.5px;width:38px;height:24px;background:#70cbe8;border:1px solid #8ad8f3;border-bottom:none"></div>
<div class="a" style="left:312px;top:474px;width:1px;height:25px;background:#3f6878"></div>
<div class="a" style="left:314px;top:474px;width:1px;height:25px;background:#3f6878"></div>
<div class="a" style="left:315px;top:474.5px;width:39px;height:24px;background:#70cbe8;border:1px solid #8ad8f3;border-bottom:none"></div>
<div class="a" style="left:354px;top:474px;width:1px;height:25px;background:#3f6878"></div>
<!-- notepad -->
<svg class="a" style="left:162px;top:477px" width="22" height="20" viewBox="0 0 22 20">
 <defs><linearGradient id="np" x1="0" y1="0" x2="1" y2="1"><stop offset="0" stop-color="#d8f0f8"/><stop offset="0.5" stop-color="#7cc4dc"/><stop offset="1" stop-color="#3a9cc0"/></linearGradient></defs>
 <path d="M14 2L20 4.5L19.5 18.5L13 16Z" fill="#f4f4f4" stroke="#b9a27a" stroke-width="0.7"/>
 <path d="M6 1.5L15.5 2.5L13 16L2 15Z" fill="url(#np)"/>
 <path d="M2 15L13 16L14.5 18.5L3 17.5Z" fill="#e8e8e8"/>
 <path d="M6.5 1.3L15 2.2" stroke="#9a9a9a" stroke-width="1.2"/>
</svg>
<!-- explorer -->
<svg class="a" style="left:203px;top:478px" width="22" height="19" viewBox="0 0 22 19">
 <path d="M1 2H8L9.5 3.5H21V17H1Z" fill="#e9c05a"/>
 <rect x="3" y="1.5" width="2" height="2" fill="#3bbf3b"/><rect x="8" y="2" width="2" height="1.8" fill="#e04848"/><rect x="12" y="2.5" width="2" height="1.6" fill="#3aa0e8"/>
 <path d="M1 5H21V17H1Z" fill="#fbe7a6"/>
 <path d="M3.5 11H18.5V17H15.5V14H6.5V17H3.5Z" fill="#8cc8e8"/>
 <rect x="5" y="9.5" width="12" height="2" fill="#d8f0fb"/>
</svg>
<!-- chrome -->
<svg class="a" style="left:243px;top:477px" width="19.5" height="19.5" viewBox="0 0 19 19"><circle cx="9.5" cy="9.5" r="9" fill="#db4437"/><path d="M9.5 9.5L1.7 5A9 9 0 0 0 5 17.3Z" fill="#0f9d58"/><path d="M9.5 9.5L5 17.3A9 9 0 0 0 18.5 9.5Z" fill="#ffcd40"/><path d="M9.5 9.5L18.5 9.5A9 9 0 0 0 17.3 5H9.5Z" fill="#db4437"/><path d="M1.7 5L9.5 9.5V5Z" fill="#db4437"/><circle cx="9.5" cy="9.5" r="4.3" fill="#fff"/><circle cx="9.5" cy="9.5" r="3.4" fill="#4285f4"/></svg>
<!-- word -->
<svg class="a" style="left:283px;top:477px" width="20" height="20" viewBox="0 0 20 20"><rect x="10" y="3" width="8.5" height="14" fill="#fff" stroke="#2b579a" stroke-width="0.9"/><path d="M11.5 5.5H17M11.5 7.5H17M11.5 9.5H17M11.5 11.5H17M11.5 13.5H17M14 4.5V15.5" stroke="#8aa6cf" stroke-width="0.7"/><path d="M0.5 2.8L12 0.5V19.5L0.5 17.2Z" fill="#2b579a"/><text x="6.2" y="13.2" text-anchor="middle" font-size="8.2" font-weight="bold" fill="#fff" font-family="Liberation Sans">W</text></svg>
<!-- skype -->
<svg class="a" style="left:325px;top:477px" width="20" height="20" viewBox="0 0 20 20"><circle cx="10" cy="10" r="9.5" fill="#0a8ed9"/><circle cx="6" cy="6" r="5" fill="#0a8ed9"/><circle cx="14" cy="14" r="5" fill="#0a8ed9"/><text x="10" y="14.3" text-anchor="middle" font-size="12" font-weight="bold" fill="#fff" font-family="Liberation Sans">S</text></svg>
<!-- tray -->
<svg class="a" style="left:778px;top:485px" width="6" height="4" viewBox="0 0 6 4"><path d="M0 4L3 0.5L6 4Z" fill="#111"/></svg>
<svg class="a" style="left:791px;top:481px" width="13" height="12" viewBox="0 0 13 12"><path d="M1 4H3.5L7 1V11L3.5 8H1Z" fill="#eee" stroke="#555" stroke-width="0.7"/><path d="M8.8 3.5Q10.3 6 8.8 8.5M10.5 2Q12.8 6 10.5 10" stroke="#555" stroke-width="0.8" fill="none"/></svg>
<svg class="a" style="left:807px;top:480px" width="13" height="14" viewBox="0 0 13 14"><path d="M1.5 1V13" stroke="#555" stroke-width="1"/><path d="M2 1.5H9L8 4.5L9 7.5H2Z" fill="#f3f3f3" stroke="#666" stroke-width="0.6"/><circle cx="9.5" cy="10" r="3.3" fill="#e8262a"/><path d="M8.2 8.7L10.8 11.3M10.8 8.7L8.2 11.3" stroke="#fff" stroke-width="0.9"/></svg>
<svg class="a" style="left:823px;top:480px" width="13" height="14" viewBox="0 0 13 14"><rect x="1" y="1" width="11" height="8" fill="#cfe7f3" stroke="#556" stroke-width="0.8"/><rect x="2.5" y="2.5" width="8" height="5" fill="#5fb8e0"/><path d="M6.5 9V12M3 12.5H10" stroke="#556" stroke-width="1"/><circle cx="3" cy="3" r="2.2" fill="#eee" stroke="#556" stroke-width="0.6"/></svg>
<div class="t" style="left:847.3px;top:477.5px;font-size:7.6px;color:#000;letter-spacing:-0.1px">12:29 PM</div>
<div class="t" style="left:845.2px;top:488.6px;font-size:7.6px;color:#000;letter-spacing:-0.1px">3/17/2020</div>
<div class="a" style="left:0;top:474px;width:1px;height:26px;background:#4a6a78"></div>
<div class="a" style="left:1px;top:474.5px;width:0.8px;height:25px;background:#7adcf7"></div>
<div class="a" style="left:0;top:498px;width:889px;height:1px;background:#72d6f4"></div>
<div class="a" style="left:0;top:499px;width:890px;height:1px;background:#4a6a78"></div>
<div class="a" style="left:888px;top:474px;width:1px;height:26px;background:#4a6a78"></div>
<div class="a" style="left:887px;top:474.5px;width:1px;height:25px;background:#72d6f4"></div>

</body></html>
